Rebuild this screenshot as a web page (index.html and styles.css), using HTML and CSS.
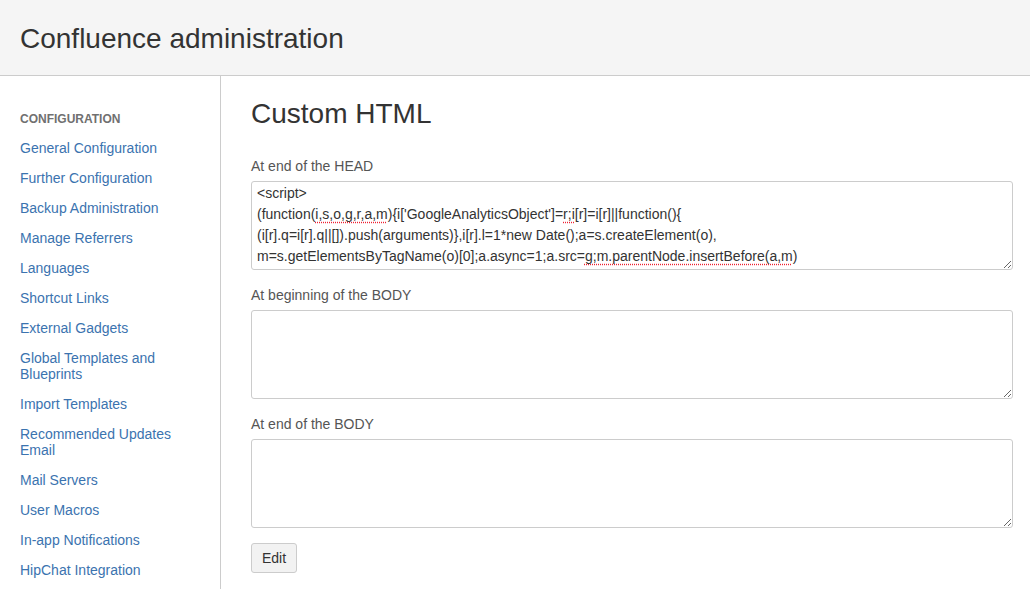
FILE: index.html
```html
<!DOCTYPE html>
<html>
<head>
  <title>Confluence administration</title>
  <link rel="stylesheet" href="styles.css">
</head>
<body>
  <header class="page-header">
    <h1>Confluence administration</h1>
  </header>

  <div class="page-body">
    <nav class="sidebar">
      <div class="nav-heading">CONFIGURATION</div>
      <ul class="nav-list">
        <li><a href="#">General Configuration</a></li>
        <li><a href="#">Further Configuration</a></li>
        <li><a href="#">Backup Administration</a></li>
        <li><a href="#">Manage Referrers</a></li>
        <li><a href="#">Languages</a></li>
        <li><a href="#">Shortcut Links</a></li>
        <li><a href="#">External Gadgets</a></li>
        <li><a href="#">Global Templates and Blueprints</a></li>
        <li><a href="#">Import Templates</a></li>
        <li><a href="#">Recommended Updates Email</a></li>
        <li><a href="#">Mail Servers</a></li>
        <li><a href="#">User Macros</a></li>
        <li><a href="#">In-app Notifications</a></li>
        <li><a href="#">HipChat Integration</a></li>
      </ul>
    </nav>

    <main class="content">
      <h2>Custom HTML</h2>

      <div class="field">
        <label>At end of the HEAD</label>
        <div class="code-box">&lt;script&gt;<br>(function(<span class="typo">i,s,o,g,r,a,m</span>){i['GoogleAnalyticsObject']=<span class="typo">r;i</span>[r]=i[r]||function(){<br>(i[r].q=i[r].q||[]).push(arguments)},i[r].l=1*new Date();a=s.createElement(o),<br>m=s.getElementsByTagName(o)[0];a.async=1;a.src=<span class="typo">g;m.parentNode.insertBefore(a,m</span>)</div>
      </div>

      <div class="field">
        <label>At beginning of the BODY</label>
        <textarea class="code-box"></textarea>
      </div>

      <div class="field">
        <label>At end of the BODY</label>
        <textarea class="code-box"></textarea>
      </div>

      <button class="edit-btn">Edit</button>
    </main>
  </div>
</body>
</html>
```

FILE: styles.css
```css
body {
  margin: 0;
  font-family: "Liberation Sans", Arial, sans-serif;
  font-size: 14px;
  color: #333;
  background: #fff;
}
.page-header {
  height: 75px;
  background: #f5f5f5;
  border-bottom: 1px solid #ccc;
  padding: 0 20px;
  display: flex;
  align-items: center;
}
.page-header h1 {
  margin: 2px 0 0 0;
  font-size: 28px;
  font-weight: normal;
  color: #333;
}
.page-body {
  display: flex;
  height: 513px;
}
.sidebar {
  width: 180px;
  padding: 36px 20px 0 20px;
  border-right: 1px solid #ccc;
  flex-shrink: 0;
}
.nav-heading {
  font-size: 12px;
  font-weight: bold;
  color: #707070;
  line-height: 14px;
  margin-bottom: 7px;
}
.nav-list {
  list-style: none;
  margin: 0;
  padding: 0;
}
.nav-list li {
  padding: 7px 0;
  line-height: 16px;
}
.nav-list a {
  color: #3b73af;
  text-decoration: none;
}
.content {
  flex: 1;
  padding: 21px 17px 0 30px;
}
.content h2 {
  margin: 0 0 25px 0;
  font-size: 28px;
  font-weight: normal;
  line-height: 34px;
  color: #333;
}
.field {
  margin-bottom: 15px;
}
.field label {
  display: block;
  color: #555;
  line-height: 20px;
  margin-bottom: 5px;
}
.code-box {
  display: block;
  box-sizing: border-box;
  width: 100%;
  height: 89px;
  margin: 0;
  padding: 1px 5px;
  border: 1px solid #ccc;
  border-radius: 3px;
  font-family: "Liberation Sans", Arial, sans-serif;
  font-size: 14px;
  line-height: 21px;
  color: #333;
  background: #fff;
  overflow: auto;
  resize: both;
  white-space: nowrap;
}
.typo {
  text-decoration: underline dotted #e23;
  text-underline-offset: 3px;
}
.edit-btn {
  font-family: "Liberation Sans", Arial, sans-serif;
  font-size: 14px;
  color: #333;
  background: #f2f2f2;
  border: 1px solid #ccc;
  border-radius: 3px;
  padding: 0 10px;
  height: 30px;
  cursor: pointer;
}
```
